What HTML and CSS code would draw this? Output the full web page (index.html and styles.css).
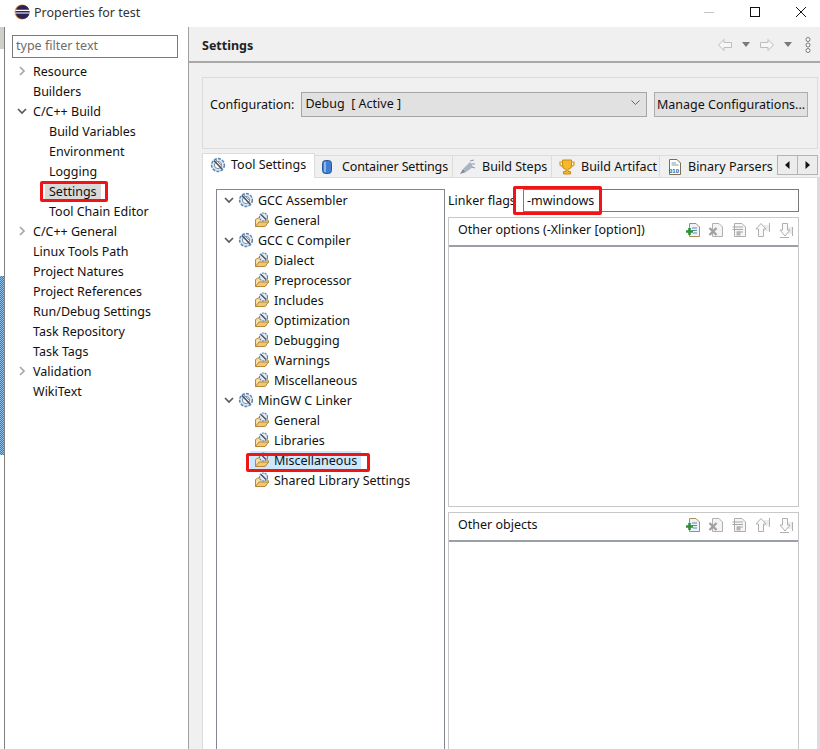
FILE: index.html
```html
<!DOCTYPE html>
<html lang="en">
<head>
<meta charset="utf-8">
<title>Properties for test</title>
<link rel="stylesheet" href="styles.css">
</head>
<body>
<svg class="defs" width="0" height="0">
  <defs>
    <symbol id="gear" viewBox="0 0 16 16">
      <circle cx="8" cy="8" r="6.4" fill="#dfe8f2" stroke="#5c87b0" stroke-width="1.5" stroke-dasharray="3 1.2"/>
      <circle cx="8" cy="8" r="3.6" fill="#fff" stroke="#6f8fb0" stroke-width="1"/>
      <path d="M4 3.5 L12 12" stroke="#4a4f5c" stroke-width="1.6"/>
      <path d="M6 3 L12 9" stroke="#8a9099" stroke-width="1"/>
    </symbol>
    <symbol id="folder" viewBox="0 0 16 16">
      <path d="M1.5 14.5 L1.5 7.5 L4 6 L8 6 L14 8 L14.5 10 L11 14.5 Z" fill="#f8dfa6" stroke="#b98a36" stroke-width="1"/>
      <path d="M1.5 14.5 L5 10 L14.5 10 L11 14.5 Z" fill="#f3c777" stroke="#b98a36" stroke-width="1"/>
      <circle cx="9.5" cy="5" r="4" fill="#e3ebf4" stroke="#5c87b0" stroke-width="1.2" stroke-dasharray="2 .8"/>
      <path d="M7 2.5 L12 7.5" stroke="#4a4f5c" stroke-width="1.4"/>
    </symbol>
    <symbol id="chev-r" viewBox="0 0 10 10"><path d="M3 1 L7 5 L3 9" fill="none" stroke="#a6a6a6" stroke-width="1.7"/></symbol>
    <symbol id="chev-d" viewBox="0 0 10 10"><path d="M1 3 L5 7 L9 3" fill="none" stroke="#5a5a5a" stroke-width="1.7"/></symbol>
    <symbol id="t-add" viewBox="0 0 16 16">
      <path d="M4.5 1.5 H11 L14.5 5 V14.5 H4.5 Z" fill="#eef3f9" stroke="#a98f55"/>
      <path d="M7 6 H12 M7 8.5 H12 M8 11 H12" stroke="#5c87b0"/>
      <path d="M4.5 6 V13 M1 9.5 H8" stroke="#2f8f3a" stroke-width="2.6"/>
    </symbol>
    <symbol id="t-del" viewBox="0 0 16 16">
      <path d="M4.5 1.5 H11 L14.5 5 V14.5 H4.5 Z" fill="#f4f4f4" stroke="#b0b0b0"/>
      <path d="M1.5 6 L8.5 13 M8.5 6 L1.5 13" stroke="#a0a0a0" stroke-width="2.4"/>
    </symbol>
    <symbol id="t-edit" viewBox="0 0 16 16">
      <path d="M3.5 1.5 H11 L14.5 5 V14.5 H3.5 Z" fill="#f6f6f6" stroke="#adadad"/>
      <path d="M1.5 5 H12 M1.5 7.5 H12 M6 10 H12" stroke="#a5a5a5"/>
      <rect x="5.5" y="9.5" width="4" height="4" fill="#b5b5b5"/>
    </symbol>
    <symbol id="t-up" viewBox="0 0 16 16">
      <path d="M10 3 H15 V9 H10" fill="#ececec"/>
      <path d="M7 1.5 L12 7 H9.5 V14.5 H4.5 V7 H2 Z" fill="#fafafa" stroke="#b0b0b0"/>
      <path d="M15.5 1 V10" stroke="#b0b0b0"/>
    </symbol>
    <symbol id="t-down" viewBox="0 0 16 16">
      <path d="M10.5 5 H15 V12 H11" fill="#ececec"/>
      <path d="M5.5 1.5 H10.5 V8 H13 L8 14 L3 8 H5.5 Z" fill="#fafafa" stroke="#b0b0b0"/>
      <path d="M15.5 5 V14 M3 15.5 H12" stroke="#b0b0b0"/>
    </symbol>
  </defs>
</svg>

<div class="window">
  <header class="titlebar">
    <svg class="app-icon" viewBox="0 0 16 16" width="16" height="16">
      <circle cx="8" cy="8" r="7.5" fill="#f0902a"/>
      <circle cx="8.6" cy="8" r="7" fill="#2c2255"/>
      <path d="M1.6 6.4 H15.6 M1.4 9 H15.6" stroke="#fff" stroke-width="1.2"/>
    </svg>
    <span class="title-text">Properties for test</span>
    <div class="win-controls">
      <svg width="12" height="12" viewBox="0 0 12 12"><path d="M1 6.5 H11" stroke="#c4c4c4"/></svg>
      <svg width="12" height="12" viewBox="0 0 12 12"><rect x="1.5" y="1.5" width="9" height="9" fill="none" stroke="#111"/></svg>
      <svg width="12" height="12" viewBox="0 0 12 12"><path d="M1 1 L11 11 M11 1 L1 11" stroke="#111"/></svg>
    </div>
  </header>

  <div class="body-row">
    <div class="desktop-strip">
      <div class="strip-a"></div>
      <div class="strip-b"></div>
      <div class="strip-c"></div>
    </div>
    <aside class="nav">
      <input class="filter" type="text" placeholder="type filter text">
      <ul class="nav-tree">
        <li class="nav-item"><svg class="tw"><use href="#chev-r"/></svg><span>Resource</span></li>
        <li class="nav-item"><span class="tw"></span><span>Builders</span></li>
        <li class="nav-item"><svg class="tw"><use href="#chev-d"/></svg><span>C/C++ Build</span></li>
        <li class="nav-item sub"><span>Build Variables</span></li>
        <li class="nav-item sub"><span>Environment</span></li>
        <li class="nav-item sub"><span>Logging</span></li>
        <li class="nav-item sub"><span class="sel-gray">Settings<i class="mark mark-settings"></i></span></li>
        <li class="nav-item sub"><span>Tool Chain Editor</span></li>
        <li class="nav-item"><svg class="tw"><use href="#chev-r"/></svg><span>C/C++ General</span></li>
        <li class="nav-item"><span class="tw"></span><span>Linux Tools Path</span></li>
        <li class="nav-item"><span class="tw"></span><span>Project Natures</span></li>
        <li class="nav-item"><span class="tw"></span><span>Project References</span></li>
        <li class="nav-item"><span class="tw"></span><span>Run/Debug Settings</span></li>
        <li class="nav-item"><span class="tw"></span><span>Task Repository</span></li>
        <li class="nav-item"><span class="tw"></span><span>Task Tags</span></li>
        <li class="nav-item"><svg class="tw"><use href="#chev-r"/></svg><span>Validation</span></li>
        <li class="nav-item"><span class="tw"></span><span>WikiText</span></li>
      </ul>
    </aside>

    <main class="page">
      <div class="page-head">
        <h1 class="page-title">Settings</h1>
        <div class="page-tools">
          <svg width="16" height="14" viewBox="0 0 16 14"><path d="M7 1.5 L1.5 7 L7 12.5 V9.5 H14.5 V4.5 H7 Z" fill="#f6f6f6" stroke="#bdbdbd"/></svg>
          <svg class="drop" width="8" height="5" viewBox="0 0 8 5"><path d="M0 0 H8 L4 5 Z" fill="#7a7a7a"/></svg>
          <svg class="fwd" width="16" height="14" viewBox="0 0 16 14"><path d="M9 1.5 L14.5 7 L9 12.5 V9.5 H1.5 V4.5 H9 Z" fill="#f6f6f6" stroke="#bdbdbd"/></svg>
          <svg class="drop" width="8" height="5" viewBox="0 0 8 5"><path d="M0 0 H8 L4 5 Z" fill="#7a7a7a"/></svg>
          <svg class="more" width="6" height="16" viewBox="0 0 6 16"><g fill="#fff" stroke="#777"><circle cx="3" cy="2.5" r="2"/><circle cx="3" cy="8" r="2"/><circle cx="3" cy="13.5" r="2"/></g></svg>
        </div>
      </div>

      <div class="page-body">
        <section class="config">
          <label class="config-label">Configuration:</label>
          <div class="combo"><span>Debug&nbsp;&nbsp;[ Active ]</span>
            <svg width="9" height="6" viewBox="0 0 9 6"><path d="M.5 .5 L4.5 4.5 L8.5 .5" fill="none" stroke="#666"/></svg>
          </div>
          <button class="btn">Manage Configurations...</button>
        </section>

        <section class="folder">
          <div class="tabs">
            <div class="tab active">
              <svg class="ico16"><use href="#gear"/></svg><span>Tool Settings</span>
            </div>
            <div class="tab tab-container">
              <svg class="ico16" viewBox="0 0 16 16"><rect x="3.5" y="1.5" width="9" height="13" rx="3" fill="#3f7fd0" stroke="#2a5a9c"/><path d="M6 3 V13" stroke="#a9ccf2" stroke-width="1.5"/></svg><span>Container Settings</span>
            </div>
            <div class="tab tab-steps">
              <svg class="ico16" viewBox="0 0 16 16"><path d="M1 15 L4 10 L7 13 Z" fill="#7d8ba0"/><path d="M4 10 L11 3 L14 8 L7 13 Z" fill="#a9b4c2"/><path d="M11 2 L15 1 M12 5 L16 5 M13 8 L16 9" stroke="#8b97a8"/></svg><span>Build Steps</span>
            </div>
            <div class="tab tab-artifact">
              <svg class="ico16" viewBox="0 0 16 16"><path d="M3.5 1 H12.5 V6 Q12.5 10 9 10.5 V12.5 H11.5 V15 H4.5 V12.5 H7 V10.5 Q3.5 10 3.5 6 Z" fill="#f4b92e" stroke="#c98a12"/><path d="M3.5 3 H1 V6 L3.8 8 M12.5 3 H15 V6 L12.2 8" fill="none" stroke="#d99a1a" stroke-width="1.2"/></svg><span>Build Artifact</span>
            </div>
            <div class="tab tab-binary">
              <svg class="ico16" viewBox="0 0 16 16"><path d="M2.5 .5 H10 L13.5 4 V15.5 H2.5 Z" fill="#fff" stroke="#7b6d4f"/><path d="M4.5 4 H9 M4.5 6 H11.5" stroke="#8a97a8"/><text x="2" y="14" class="bin-text">010</text></svg><span>Binary Parsers</span>
            </div>
            <div class="tab-scroll">
              <button class="scroll-btn"><svg width="5" height="8" viewBox="0 0 5 8"><path d="M4.5 0 V8 L0 4 Z" fill="#111"/></svg></button>
              <button class="scroll-btn"><svg width="5" height="8" viewBox="0 0 5 8"><path d="M.5 0 V8 L5 4 Z" fill="#111"/></svg></button>
            </div>
          </div>

          <div class="folder-body">
            <div class="tool-tree">
              <div class="t-row"><svg class="tw2"><use href="#chev-d"/></svg><svg class="ico16"><use href="#gear"/></svg><span>GCC Assembler</span></div>
              <div class="t-row t-sub"><svg class="ico16"><use href="#folder"/></svg><span>General</span></div>
              <div class="t-row"><svg class="tw2"><use href="#chev-d"/></svg><svg class="ico16"><use href="#gear"/></svg><span>GCC C Compiler</span></div>
              <div class="t-row t-sub"><svg class="ico16"><use href="#folder"/></svg><span>Dialect</span></div>
              <div class="t-row t-sub"><svg class="ico16"><use href="#folder"/></svg><span>Preprocessor</span></div>
              <div class="t-row t-sub"><svg class="ico16"><use href="#folder"/></svg><span>Includes</span></div>
              <div class="t-row t-sub"><svg class="ico16"><use href="#folder"/></svg><span>Optimization</span></div>
              <div class="t-row t-sub"><svg class="ico16"><use href="#folder"/></svg><span>Debugging</span></div>
              <div class="t-row t-sub"><svg class="ico16"><use href="#folder"/></svg><span>Warnings</span></div>
              <div class="t-row t-sub"><svg class="ico16"><use href="#folder"/></svg><span>Miscellaneous</span></div>
              <div class="t-row"><svg class="tw2"><use href="#chev-d"/></svg><svg class="ico16"><use href="#gear"/></svg><span>MinGW C Linker</span></div>
              <div class="t-row t-sub"><svg class="ico16"><use href="#folder"/></svg><span>General</span></div>
              <div class="t-row t-sub"><svg class="ico16"><use href="#folder"/></svg><span>Libraries</span></div>
              <div class="t-row t-sub"><div class="sel-blue"><svg class="ico16"><use href="#folder"/></svg><span>Miscellaneous</span></div><i class="mark mark-misc"></i></div>
              <div class="t-row t-sub"><svg class="ico16"><use href="#folder"/></svg><span>Shared Library Settings</span></div>
            </div>

            <div class="options">
              <div class="flags">
                <label class="flags-label">Linker flags</label>
                <div class="flags-input"><span>-mwindows</span><i class="mark mark-flags"></i></div>
              </div>

              <div class="list-block list-a">
                <div class="list-head">
                  <span>Other options (-Xlinker [option])</span>
                  <div class="list-tools">
                    <svg class="ico16"><use href="#t-add"/></svg>
                    <svg class="ico16"><use href="#t-del"/></svg>
                    <svg class="ico16"><use href="#t-edit"/></svg>
                    <svg class="ico16"><use href="#t-up"/></svg>
                    <svg class="ico16"><use href="#t-down"/></svg>
                  </div>
                </div>
                <div class="list-area"></div>
              </div>

              <div class="list-block list-b">
                <div class="list-head">
                  <span>Other objects</span>
                  <div class="list-tools">
                    <svg class="ico16"><use href="#t-add"/></svg>
                    <svg class="ico16"><use href="#t-del"/></svg>
                    <svg class="ico16"><use href="#t-edit"/></svg>
                    <svg class="ico16"><use href="#t-up"/></svg>
                    <svg class="ico16"><use href="#t-down"/></svg>
                  </div>
                </div>
                <div class="list-area"></div>
              </div>
            </div>
          </div>
        </section>
      </div>
    </main>
  </div>
</div>
</body>
</html>
```

FILE: styles.css
```css
* { box-sizing: border-box; }
html, body { margin: 0; padding: 0; }
body {
  width: 820px;
  height: 749px;
  overflow: hidden;
  background: #fff;
  font-family: "Noto Sans", "Open Sans", sans-serif;
  font-size: 12.5px;
  color: #111;
}
.defs { position: absolute; }
.window { display: flex; flex-direction: column; height: 749px; }

.titlebar {
  height: 27px;
  flex: none;
  display: flex;
  align-items: center;
  padding: 0 0 3px 14px;
  background: #fff;
}
.title-text { margin-left: 4px; font-size: 12.5px; color: #333; }
.app-icon { flex: none; }
.win-controls {
  margin-left: auto;
  display: flex;
  gap: 34px;
  padding-right: 13px;
}

.body-row { flex: 1; display: flex; min-height: 0; }
.desktop-strip {
  width: 5px;
  flex: none;
  display: flex;
  flex-direction: column;
  border-right: 1px solid #808080;
  background: #fff;
}
.strip-a { height: 22px; background: #cfcfc8; }
.strip-b { height: 227px; background: #fff; }
.strip-c {
  height: 179px;
  background: repeating-conic-gradient(#2f7cc8 0 25%, #8fc0ea 0 50%) 0 0 / 2px 2px;
}

.nav {
  width: 184px;
  flex: none;
  padding: 8px 0 0 7px;
  border-right: 1px solid #a0a0a0;
  background: #fff;
}
.filter {
  display: block;
  width: 166px;
  height: 23px;
  border: 1px solid #7a7a7a;
  padding: 0 3px 2px;
  font: inherit;
  background: #fff;
  outline: none;
}
.filter::placeholder { color: #6d6d6d; opacity: 1; }
.nav-tree { list-style: none; margin: 3px 0 0; padding: 0; }
.nav-item {
  height: 20px;
  display: flex;
  align-items: center;
  padding-left: 5px;
  white-space: nowrap;
}
.nav-item.sub { padding-left: 37px; }
.tw { width: 10px; height: 10px; margin-right: 6px; flex: none; display: block; }
.sel-gray { position: relative; background: #d9d9d9; padding: 0 4px; margin-left: -4px; }

.mark {
  position: absolute;
  border: 3px solid #f01414;
  border-radius: 2px;
  pointer-events: none;
  display: block;
}
.mark-settings { left: -5px; top: -2px; width: 68px; height: 21px; }
.mark-flags { left: -11px; top: -4px; width: 89px; height: 29px; }
.mark-misc { left: 29px; top: 3px; width: 124px; height: 19px; }

.page { flex: 1; min-width: 0; display: flex; flex-direction: column; background: #f0f0f0; }
.page-head {
  height: 36px;
  flex: none;
  display: flex;
  align-items: center;
  justify-content: space-between;
  padding: 3px 9px 0 13px;
  border-bottom: 2px solid #a9a9a9;
}
.page-title { margin: 0; font-size: 12.5px; font-weight: 700; color: #222; }
.page-tools { display: flex; align-items: center; margin-top: -2px; }
.drop { margin-left: 9px; }
.fwd { margin-left: 9px; }
.more { margin-left: 13px; }

.page-body { flex: 1; min-height: 0; padding: 14px 0 0 13px; display: flex; flex-direction: column; }
.config {
  width: 616px;
  height: 72px;
  flex: none;
  display: flex;
  align-items: flex-start;
  padding: 14px 9px 0 7px;
  border: 1px solid #dcdcdc;
}
.config-label { line-height: 26px; margin-right: 7px; }
.combo {
  width: 346px;
  height: 25px;
  display: flex;
  align-items: center;
  justify-content: space-between;
  padding: 0 6px 3px 3px;
  background: #e1e1e1;
  border: 1px solid #a5a5a5;
}
.btn {
  margin-left: 7px;
  width: 154px;
  height: 25px;
  padding: 0;
  font: inherit;
  color: inherit;
  background: #e1e1e1;
  border: 1px solid #adadad;
  white-space: nowrap;
}

.folder { flex: 1; min-height: 0; margin-top: 4px; display: flex; flex-direction: column; width: 618px; }
.tabs { height: 25px; flex: none; display: flex; align-items: flex-end; position: relative; }
.tab {
  flex: none;
  height: 23px;
  display: flex;
  align-items: center;
  gap: 5px;
  border: 1px solid #dcdcdc;
  border-left: 0;
  background: #f0f0f0;
  white-space: nowrap;
}
.tab.active {
  height: 25px;
  width: 113px;
  padding-left: 7px;
  background: #fff;
  border-left: 1px solid #dcdcdc;
  border-bottom: 0;
  padding-bottom: 3px;
}
.tab-container { width: 138px; padding-left: 4px; gap: 7px; letter-spacing: -0.15px; }
.tab-steps { width: 99px; padding-left: 6px; gap: 7px; }
.tab-artifact { width: 108px; padding-left: 7px; gap: 6px; }
.tab-binary { width: 117px; padding-left: 7px; border-right: 0; }
.ico16 { width: 16px; height: 16px; flex: none; display: block; }
.bin-text { font: 700 6px "Liberation Sans", sans-serif; fill: #2a5a9c; }
.tab-scroll { margin-left: auto; display: flex; align-items: flex-start; height: 23px; margin-right: 2px; }
.scroll-btn {
  width: 21px;
  height: 20px;
  padding: 0;
  display: flex;
  align-items: center;
  justify-content: center;
  background: #ececec;
  border: 1px solid #b4b4b4;
}
.scroll-btn + .scroll-btn { margin-left: -1px; }

.folder-body {
  flex: 1;
  min-height: 0;
  display: flex;
  background: #fff;
  border-left: 1px solid #dcdcdc;
  border-top: 1px solid #dcdcdc;
  border-right: 3px solid #dcdcdc;
  margin-top: -1px;
  padding: 11px 18px 0 13px;
}
.tool-tree {
  position: relative;
  width: 229px;
  flex: none;
  border: 1px solid #828790;
  border-bottom: 0;
}
.t-row {
  position: relative;
  height: 20px;
  display: flex;
  align-items: center;
  padding-left: 7px;
  white-space: nowrap;
}
.tw2 { width: 10px; height: 10px; margin-right: 4px; flex: none; display: block; }
.t-row .ico16 { margin-right: 4px; }
.t-sub { padding-left: 37px; }
.sel-blue {
  height: 19px;
  display: flex;
  align-items: center;
  background: #cce8ff;
  padding: 0 4px;
  margin-left: -4px;
}

.options { flex: 1; min-width: 0; margin-left: 3px; display: flex; flex-direction: column; }
.flags { height: 23px; flex: none; display: flex; align-items: center; }
.flags-label { width: 75px; }
.flags-input {
  position: relative;
  flex: 1;
  height: 23px;
  display: flex;
  align-items: center;
  padding-left: 3px;
  border: 1px solid #7a7a7a;
  background: #fff;
}
.list-block { display: flex; flex-direction: column; border: 1px solid #c8c8c8; }
.list-a { height: 290px; margin-top: 5px; flex: none; }
.list-b { flex: 1; min-height: 0; margin-top: 5px; border-bottom: 0; }
.list-head {
  height: 29px;
  flex: none;
  display: flex;
  align-items: center;
  justify-content: space-between;
  padding: 0 5px 4px 9px;
  border-bottom: 2px solid #9aa0a6;
}
.list-tools { display: flex; gap: 7px; }
.list-area { flex: 1; background: #fff; }
```
